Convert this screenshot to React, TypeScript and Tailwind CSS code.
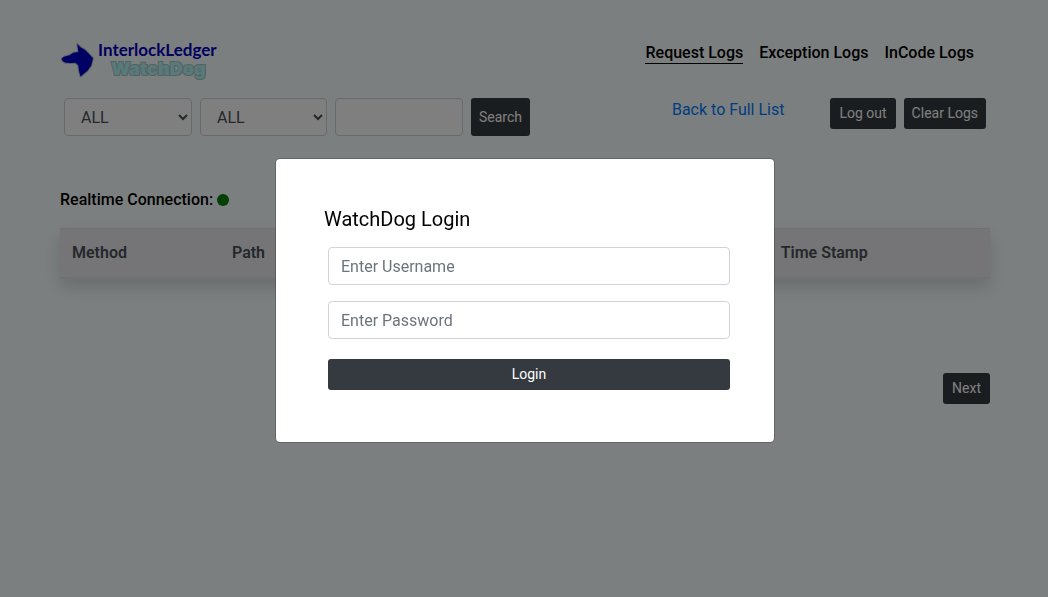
import React from "react";

const darkButton =
  "rounded-[3px] bg-[#343a40] text-sm leading-[21px] text-white";
const field =
  "h-[38px] rounded-[4px] border border-[#ced4da] bg-white px-3 text-base text-[#495057]";

function Logo() {
  return (
    <a href="#" className="flex items-start gap-1" aria-label="InterlockLedger WatchDog">
      <svg viewBox="0 0 34 38" className="h-[38px] w-[34px]" aria-hidden="true">
        <path
          d="M17.2 4 L20.5 7.2 L24.5 9.5 L28.6 13.4 L33 18.2 L31.2 25.5 L27.5 30.8 L20.6 36.6 L19.2 32 L18.2 25.2 L15.5 22.8 L11 23 L5.5 22.8 L2.8 21.2 L1.6 18.8 L4 16.8 L9.5 15.2 L13.5 12.8 L18.4 12 Z"
          fill="#0000c8"
          stroke="#c0c4c8"
          strokeWidth="2"
          strokeLinejoin="round"
          paintOrder="stroke"
        />
      </svg>
      <span className="flex flex-col">
        <span className="font-[Lato,sans-serif] text-[17px] font-bold leading-[20px] text-[#0000c0]">
          InterlockLedger
        </span>
        <span className="pl-[13px] font-[Inter,sans-serif] text-[18px] font-black leading-[18px] text-[#b0f4f4] [-webkit-text-stroke:2px_#a8c4c4] [paint-order:stroke]">
          WatchDog
        </span>
      </span>
    </a>
  );
}

function Header() {
  return (
    <header className="flex items-start justify-between">
      <Logo />
      <nav className="flex gap-4 pr-4 pt-[2px] font-medium leading-[21px] text-black">
        <a href="#requests" className="border-b border-black">Request Logs</a>
        <a href="#exceptions">Exception Logs</a>
        <a href="#incode">InCode Logs</a>
      </nav>
    </header>
  );
}

function Toolbar() {
  return (
    <div className="mt-5 flex items-start justify-between px-1">
      <form className="flex gap-2">
        <select aria-label="Method" className={`${field} w-32`}>
          <option>ALL</option>
        </select>
        <select aria-label="Status code" className={`${field} w-[127px]`}>
          <option>ALL</option>
        </select>
        <input aria-label="Search text" className={`${field} w-32`} />
        <button type="button" className={`${darkButton} h-[38px] px-2`}>Search</button>
      </form>
      <div className="flex items-start gap-2">
        <a href="#all" className="mr-[38px] text-[#007bff]">Back to Full List</a>
        <button type="button" className={`${darkButton} px-[9px] py-[5px]`}>Log out</button>
        <button type="button" className={`${darkButton} px-2 py-[5px]`}>Clear Logs</button>
      </div>
    </div>
  );
}

function LogTable() {
  return (
    <table className="mt-4 w-full table-fixed text-left text-[#495057] shadow-[0_8px_16px_rgba(0,0,0,0.15)]">
      <thead className="bg-[#ebebee]">
        <tr className="border-t border-b-2 border-[#dee2e6]">
          <th className="w-[17.2%] p-3 font-semibold">Method</th>
          <th className="w-[59%] p-3 font-semibold">Path</th>
          <th className="w-[23.8%] p-3 font-semibold">Time Stamp</th>
        </tr>
      </thead>
    </table>
  );
}

function LoginDialog() {
  return (
    <div className="fixed inset-0 flex items-start justify-center bg-black/50 pl-[2px] pt-[158px]">
      <div
        role="dialog"
        aria-modal="true"
        aria-labelledby="login-title"
        className="w-full max-w-[500px] rounded-[5px] border border-black/20 bg-white bg-clip-padding pb-[52px] pl-12 pr-11 pt-12"
      >
        <h1 id="login-title" className="text-xl leading-6 text-black">WatchDog Login</h1>
        <form className="ml-1 mt-4 flex flex-col gap-4">
          <input aria-label="Username" placeholder="Enter Username" className={`${field} placeholder:text-[#6c757d]`} />
          <input aria-label="Password" type="password" placeholder="Enter Password" className={`${field} placeholder:text-[#6c757d]`} />
          <button type="button" className={`${darkButton} mt-1 py-[5px]`}>Login</button>
        </form>
      </div>
    </div>
  );
}

export default function App() {
  return (
    <div className="min-h-screen bg-[#f8ffff] font-[Roboto,sans-serif] text-base">
      <main className="pl-[60px] pr-[58px] pt-10">
        <Header />
        <Toolbar />
        <p className="mt-[52px] flex items-center gap-1 font-medium text-black">
          Realtime Connection:
          <span className="size-3 rounded-full bg-[#008000]" />
        </p>
        <LogTable />
        <div className="mt-[94px] flex justify-end">
          <button type="button" className={`${darkButton} px-[9px] py-[5px]`}>Next</button>
        </div>
      </main>
      <LoginDialog />
    </div>
  );
}
